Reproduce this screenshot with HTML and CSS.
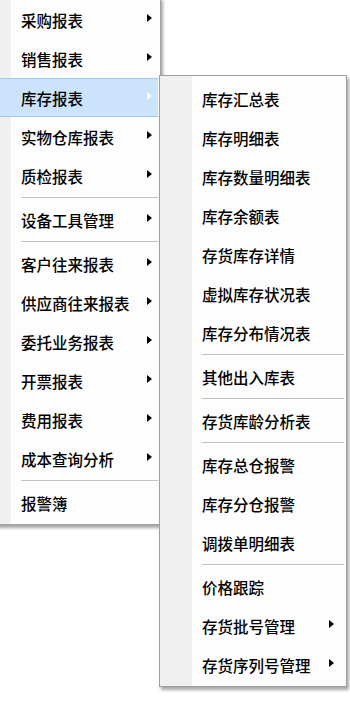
FILE: index.html
```html
<!DOCTYPE html>
<html>
<head>
    <meta charset="utf-8">
    <meta name="viewport" content="width=device-width, initial-scale=1">
    <title>报表菜单</title>
    <link rel="stylesheet" href="styles.css">
</head>
<body>
    <!-- main report menu (top part is scrolled off) -->
    <ul class="menu menu-main">
        <li class="item has-sub">采购报表<span class="arrow"></span></li>
        <li class="item has-sub">销售报表<span class="arrow"></span></li>
        <li class="item has-sub active">库存报表<span class="arrow"></span></li>
        <li class="item has-sub">实物仓库报表<span class="arrow"></span></li>
        <li class="item has-sub">质检报表<span class="arrow"></span></li>
        <li class="sep"></li>
        <li class="item has-sub">设备工具管理<span class="arrow"></span></li>
        <li class="sep"></li>
        <li class="item has-sub">客户往来报表<span class="arrow"></span></li>
        <li class="item has-sub">供应商往来报表<span class="arrow"></span></li>
        <li class="item has-sub">委托业务报表<span class="arrow"></span></li>
        <li class="item has-sub">开票报表<span class="arrow"></span></li>
        <li class="item has-sub">费用报表<span class="arrow"></span></li>
        <li class="item has-sub">成本查询分析<span class="arrow"></span></li>
        <li class="sep"></li>
        <li class="item">报警簿</li>
    </ul>

    <!-- 库存报表 submenu -->
    <ul class="menu menu-sub">
        <li class="item">库存汇总表</li>
        <li class="item">库存明细表</li>
        <li class="item">库存数量明细表</li>
        <li class="item">库存余额表</li>
        <li class="item">存货库存详情</li>
        <li class="item">虚拟库存状况表</li>
        <li class="item">库存分布情况表</li>
        <li class="sep"></li>
        <li class="item">其他出入库表</li>
        <li class="sep"></li>
        <li class="item">存货库龄分析表</li>
        <li class="sep"></li>
        <li class="item">库存总仓报警</li>
        <li class="item">库存分仓报警</li>
        <li class="item">调拨单明细表</li>
        <li class="sep"></li>
        <li class="item">价格跟踪</li>
        <li class="item has-sub">存货批号管理<span class="arrow"></span></li>
        <li class="item has-sub">存货序列号管理<span class="arrow"></span></li>
    </ul>
</body>
</html>
```

FILE: styles.css
```css
* {
    box-sizing: border-box;
}
body {
    margin: 0;
    width: 350px;
    height: 701px;
    overflow: hidden;
    background: #ffffff;
    font-family: "Noto Sans CJK SC", "Liberation Sans", sans-serif;
}

/* popup menus */
.menu {
    position: absolute;
    margin: 0;
    padding: 2px;
    list-style: none;
    border: 1px solid #a0a0a0;
    background: linear-gradient(to right, #f0f0f0 32px, #fdfdfd 32px);
    box-shadow: 2px 3px 3px rgba(0, 0, 0, 0.35);
}
.menu-main {
    left: -22px;
    top: -3px;
    width: 183px;
}
.menu-sub {
    left: 159px;
    top: 75px;
    width: 188px;
    padding-top: 3px;
}

.item {
    display: flex;
    align-items: center;
    height: 39px;
    padding-left: 40px;
    padding-right: 6px;
    font-size: 15.5px;
    font-weight: 500;
    color: #000;
    white-space: nowrap;
}
.menu-sub .item {
    padding-right: 10px;
}
.item.active {
    background: #cce4fb;
    border-top: 1px solid #9ccaf3;
    border-bottom: 1px solid #9ccaf3;
}

.arrow {
    margin-left: auto;
    margin-top: -3px;
    width: 0;
    height: 0;
    border-left: 5px solid #000;
    border-top: 4px solid transparent;
    border-bottom: 4px solid transparent;
}
.active .arrow {
    border-left-color: #ffffff;
}

.sep {
    height: 5px;
    margin-left: 40px;
    padding-top: 2px;
}
.sep::before {
    content: "";
    display: block;
    border-top: 1px solid #c4c4c4;
}
```
